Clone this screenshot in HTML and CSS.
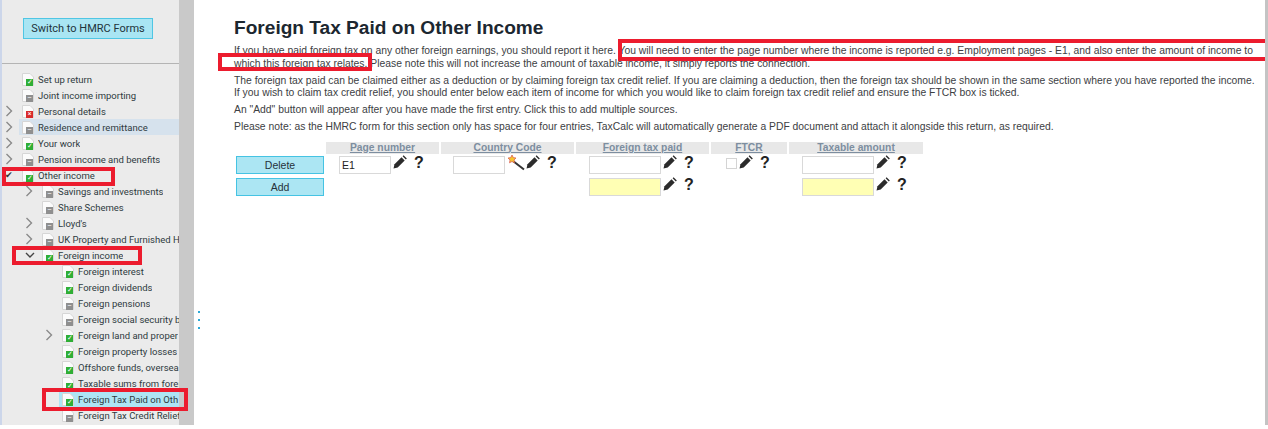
FILE: index.html
```html
<!DOCTYPE html>
<html>
  <head>
    <meta charset="UTF-8" />
    <title>Foreign Tax Paid on Other Income</title>
    <link rel="stylesheet" href="styles.css">
  </head>
  <body>
    <svg class="defs" width="0" height="0">
      <symbol id="page" viewBox="0 0 12 13">
        <path d="M.5.5h7.500l3.500 3.500v8.500H.5z" fill="#fbfbfb" stroke="#d6d6d6" />
      </symbol>
      <symbol id="pencil" viewBox="0 0 14 14">
        <path d="M0.500 13.500l1-4.200 7-7 3.200 3.200-7 7z" fill="#2b2b2b" />
        <path d="M9.600 1.200l1-1 3.200 3.200-1 1z" fill="#2b2b2b" />
      </symbol>
      <symbol id="wand" viewBox="0 0 18 16">
        <path d="M6 6l11 8.500" stroke="#333" stroke-width="2" />
        <path d="M5 0l1.300 2.600 2.700.4-2 2 .5 2.800L5 6.500 2.500 7.800 3 5 1 3l2.700-.4z" fill="#f4c430" stroke="#d9534f" stroke-width=".7" />
      </symbol>
      <symbol id="closed" viewBox="0 0 8 12">
        <path d="M1.500 1l5 5-5 5" fill="none" stroke="#8a8a8a" stroke-width="1.400" />
      </symbol>
      <symbol id="open" viewBox="0 0 10 7">
        <path d="M1 1l4 4 4-4" fill="none" stroke="#444" stroke-width="1.400" />
      </symbol>
    </svg>

    <div class="app">
      <div class="sidebar">
        <div class="switch-area">
          <button class="switch-button">Switch to HMRC Forms</button>
        </div>
        <div class="tree">
          <div class="row"><span class="arrow"></span><span class="doc done"><svg><use href="#page" /></svg></span><span class="name">Set up return</span></div>
          <div class="row"><span class="arrow"></span><span class="doc none"><svg><use href="#page" /></svg></span><span class="name">Joint income importing</span></div>
          <div class="row"><span class="arrow"><svg class="chev"><use href="#closed" /></svg></span><span class="doc error"><svg><use href="#page" /></svg></span><span class="name">Personal details</span></div>
          <div class="row hover"><span class="arrow"><svg class="chev"><use href="#closed" /></svg></span><span class="doc none"><svg><use href="#page" /></svg></span><span class="name">Residence and remittance</span></div>
          <div class="row"><span class="arrow"><svg class="chev"><use href="#closed" /></svg></span><span class="doc done"><svg><use href="#page" /></svg></span><span class="name">Your work</span></div>
          <div class="row"><span class="arrow"><svg class="chev"><use href="#closed" /></svg></span><span class="doc none"><svg><use href="#page" /></svg></span><span class="name">Pension income and benefits</span></div>
          <div class="row"><span class="arrow tick">✔</span><span class="doc done"><svg><use href="#page" /></svg></span><span class="name">Other income</span></div>

          <div class="row level-1"><span class="arrow"><svg class="chev"><use href="#closed" /></svg></span><span class="doc none"><svg><use href="#page" /></svg></span><span class="name">Savings and investments</span></div>
          <div class="row level-1"><span class="arrow"></span><span class="doc none"><svg><use href="#page" /></svg></span><span class="name">Share Schemes</span></div>
          <div class="row level-1"><span class="arrow"><svg class="chev"><use href="#closed" /></svg></span><span class="doc none"><svg><use href="#page" /></svg></span><span class="name">Lloyd's</span></div>
          <div class="row level-1"><span class="arrow"><svg class="chev"><use href="#closed" /></svg></span><span class="doc none"><svg><use href="#page" /></svg></span><span class="name">UK Property and Furnished H</span></div>
          <div class="row level-1"><span class="arrow"><svg class="chev-open"><use href="#open" /></svg></span><span class="doc done"><svg><use href="#page" /></svg></span><span class="name">Foreign income</span></div>

          <div class="row level-2"><span class="arrow"></span><span class="doc done"><svg><use href="#page" /></svg></span><span class="name">Foreign interest</span></div>
          <div class="row level-2"><span class="arrow"></span><span class="doc done"><svg><use href="#page" /></svg></span><span class="name">Foreign dividends</span></div>
          <div class="row level-2"><span class="arrow"></span><span class="doc none"><svg><use href="#page" /></svg></span><span class="name">Foreign pensions</span></div>
          <div class="row level-2"><span class="arrow"></span><span class="doc none"><svg><use href="#page" /></svg></span><span class="name">Foreign social security b</span></div>
          <div class="row level-2"><span class="arrow"><svg class="chev"><use href="#closed" /></svg></span><span class="doc done"><svg><use href="#page" /></svg></span><span class="name">Foreign land and proper</span></div>
          <div class="row level-2"><span class="arrow"></span><span class="doc done"><svg><use href="#page" /></svg></span><span class="name">Foreign property losses</span></div>
          <div class="row level-2"><span class="arrow"></span><span class="doc done"><svg><use href="#page" /></svg></span><span class="name">Offshore funds, oversea</span></div>
          <div class="row level-2"><span class="arrow"></span><span class="doc done"><svg><use href="#page" /></svg></span><span class="name">Taxable sums from forei</span></div>
          <div class="row level-2 selected"><span class="arrow"></span><span class="doc done"><svg><use href="#page" /></svg></span><span class="name">Foreign Tax Paid on Oth</span></div>
          <div class="row level-2"><span class="arrow"></span><span class="doc none"><svg><use href="#page" /></svg></span><span class="name">Foreign Tax Credit Relief</span></div>
        </div>
      </div>

      <div class="splitter"></div>

      <div class="main">
        <div class="grip"><i></i><i></i><i></i></div>
        <h1>Foreign Tax Paid on Other Income</h1>
        <p>If you have paid foreign tax on any other foreign earnings, you should report it here. You will need to enter the page number where the income is reported e.g. Employment pages - E1, and also enter the amount of income to<br>which this foreign tax relates. Please note this will not increase the amount of taxable income, it simply reports the connection.</p>
        <p>The foreign tax paid can be claimed either as a deduction or by claiming foreign tax credit relief. If you are claiming a deduction, then the foreign tax should be shown in the same section where you have reported the income.<br>If you wish to claim tax credit relief, you should enter below each item of income for which you would like to claim foreign tax credit relief and ensure the FTCR box is ticked.</p>
        <p>An "Add" button will appear after you have made the first entry. Click this to add multiple sources.</p>
        <p>Please note: as the HMRC form for this section only has space for four entries, TaxCalc will automatically generate a PDF document and attach it alongside this return, as required.</p>

        <div class="entry-grid">
          <div></div>
          <div class="head">Page number</div>
          <div class="head">Country Code</div>
          <div class="head">Foreign tax paid</div>
          <div class="head">FTCR</div>
          <div class="head">Taxable amount</div>

          <button class="row-button">Delete</button>
          <div class="cell"><input class="field short" type="text" value="E1"><svg class="pen"><use href="#pencil" /></svg><span class="help">?</span></div>
          <div class="cell code-cell"><input class="field short" type="text"><svg class="wand"><use href="#wand" /></svg><svg class="pen"><use href="#pencil" /></svg><span class="help">?</span></div>
          <div class="cell"><input class="field" type="text"><svg class="pen"><use href="#pencil" /></svg><span class="help">?</span></div>
          <div class="cell tick-cell"><span class="box"></span><svg class="pen"><use href="#pencil" /></svg><span class="help">?</span></div>
          <div class="cell"><input class="field" type="text"><svg class="pen"><use href="#pencil" /></svg><span class="help">?</span></div>

          <button class="row-button">Add</button>
          <div></div>
          <div></div>
          <div class="cell"><input class="field required" type="text"><svg class="pen"><use href="#pencil" /></svg><span class="help">?</span></div>
          <div></div>
          <div class="cell"><input class="field required" type="text"><svg class="pen"><use href="#pencil" /></svg><span class="help">?</span></div>
        </div>
      </div>

      <!-- red markers drawn over the screenshot -->
      <div class="mark mark-other"></div>
      <div class="mark mark-foreign"></div>
      <div class="mark mark-paid"></div>
      <div class="mark mark-text1"></div>
      <div class="mark mark-text2"></div>
    </div>
  </body>
</html>
```

FILE: styles.css
```css
* {
  box-sizing: border-box;
}
body {
  margin: 0;
  background-color: #ffffff;
  overflow: hidden;
}
.defs {
  display: block;
  height: 0;
}
.app {
  position: relative;
  display: flex;
  width: 1268px;
  height: 425px;
  overflow: hidden;
  border-right: 3px solid #c4c4c4;
}

/* left tree */
.sidebar {
  flex: 0 0 179px;
  min-width: 0;
  overflow: hidden;
  background-color: #ebebeb;
  border-left: 2px solid #ccd6ea;
  font-family: Roboto, sans-serif;
  font-size: 9.5px;
  color: #2e3a40;
}
.switch-area {
  height: 64px;
  padding: 18px 0 0 21px;
  border-bottom: 1px solid #b4b4b4;
}
.switch-button {
  display: block;
  width: 130px;
  height: 21px;
  padding: 0;
  border: 1px solid #4fc6e4;
  background-color: #a9e5f3;
  color: #22333a;
  font-family: Roboto, sans-serif;
  font-size: 11px;
  white-space: nowrap;
}
.tree {
  padding-top: 7px;
}
.row {
  display: flex;
  align-items: center;
  height: 16px;
  white-space: nowrap;
  overflow: hidden;
}
.row .arrow {
  flex: 0 0 20px;
  height: 16px;
  display: flex;
  align-items: center;
  padding-left: 3px;
}
.level-1 {
  padding-left: 20px;
}
.level-2 {
  padding-left: 40px;
}
.chev {
  width: 8px;
  height: 12px;
}
.chev-open {
  width: 10px;
  height: 7px;
}
.tick {
  font-size: 9px;
  color: #333333;
  padding-left: 1px;
}
.doc {
  position: relative;
  flex: 0 0 16px;
  height: 16px;
}
.doc svg {
  display: block;
  width: 12px;
  height: 13px;
  margin-top: 2px;
}
.doc::after {
  position: absolute;
  left: 4px;
  bottom: 1px;
  width: 7px;
  height: 7px;
  font-size: 7px;
  line-height: 7px;
  text-align: center;
  color: #ffffff;
}
.done::after {
  content: "✓";
  background-color: #2fae35;
}
.none::after {
  content: "–";
  background-color: #8f8f8f;
}
.error::after {
  content: "×";
  background-color: #d92b2b;
}
.name {
  overflow: hidden;
}
.hover {
  background: linear-gradient(to right, #ebebeb 17px, #d6e2ed 17px);
}
.selected {
  background: linear-gradient(to right, #ebebeb 57px, #aee5f4 57px);
}
.splitter {
  flex: 0 0 15px;
  background-color: #c9c9c9;
}

/* main form */
.main {
  position: relative;
  flex: 1;
  min-width: 0;
  padding: 16px 0 0 40px;
  font-family: "Liberation Sans", Arial, sans-serif;
  font-size: 10.35px;
  line-height: 12.5px;
  color: #3c4043;
}
.grip {
  position: absolute;
  left: 4px;
  top: 311px;
  display: flex;
  flex-direction: column;
  gap: 6px;
}
.grip i {
  display: block;
  width: 2px;
  height: 2px;
  background-color: #2aa9d8;
}
h1 {
  margin: 0 0 6px;
  font-size: 19.1px;
  line-height: 23px;
  font-weight: bold;
  color: #1c2730;
}
p {
  margin: 0 0 4.5px;
  white-space: nowrap;
}
.entry-grid {
  display: grid;
  grid-template-columns: 88px 113px 133px 133px 76px 134px;
  grid-template-rows: 12px 20px 18px;
  gap: 2px;
  margin: 8px 0 0 2px;
}
.head {
  height: 12px;
  background-color: #e8e8e8;
  text-align: center;
  font-size: 10.3px;
  font-weight: bold;
  line-height: 12px;
  color: #7d8ea0;
  text-decoration: underline;
}
.row-button {
  height: 18px;
  padding: 0;
  border: 1px solid #45c3e3;
  background-color: #ace6f3;
  font-family: "Liberation Sans", Arial, sans-serif;
  font-size: 10.5px;
  color: #26323a;
}
.cell {
  display: flex;
  align-items: flex-start;
  padding-left: 13px;
  height: 18px;
}
.code-cell {
  padding-left: 12px;
}
.tick-cell {
  padding-left: 15px;
}
.field {
  width: 72px;
  height: 18px;
  padding: 0 2px;
  border: 1px solid #d9d9d9;
  background-color: #ffffff;
  font-family: "Liberation Sans", Arial, sans-serif;
  font-size: 10.5px;
  color: #222222;
}
.short {
  width: 52px;
}
.required {
  background-color: #ffffb4;
}
.box {
  width: 11px;
  height: 11px;
  margin-top: 2px;
  border: 1px solid #d4d4d4;
  background-color: #ffffff;
}
.pen {
  flex: 0 0 14px;
  width: 14px;
  height: 14px;
  margin-left: 2px;
  margin-top: -1px;
}
.wand {
  flex: 0 0 18px;
  width: 18px;
  height: 16px;
  margin-left: 2px;
  margin-top: -1px;
  margin-right: -1px;
}
.help {
  margin-left: 7px;
  margin-top: -2px;
  font-size: 16px;
  line-height: 17px;
  font-weight: bold;
  color: #222222;
}

/* red annotation boxes */
.mark {
  position: absolute;
  border: 4px solid #ec1c2e;
}
.mark-other {
  left: 2px;
  top: 167px;
  width: 113px;
  height: 19px;
}
.mark-foreign {
  left: 12px;
  top: 246px;
  width: 130px;
  height: 19px;
}
.mark-paid {
  left: 42px;
  top: 388px;
  width: 146px;
  height: 23px;
}
.mark-text1 {
  left: 618px;
  top: 39px;
  width: 647px;
  height: 22px;
  border-right: 0;
}
.mark-text2 {
  left: 218px;
  top: 53px;
  width: 154px;
  height: 18px;
}
```
